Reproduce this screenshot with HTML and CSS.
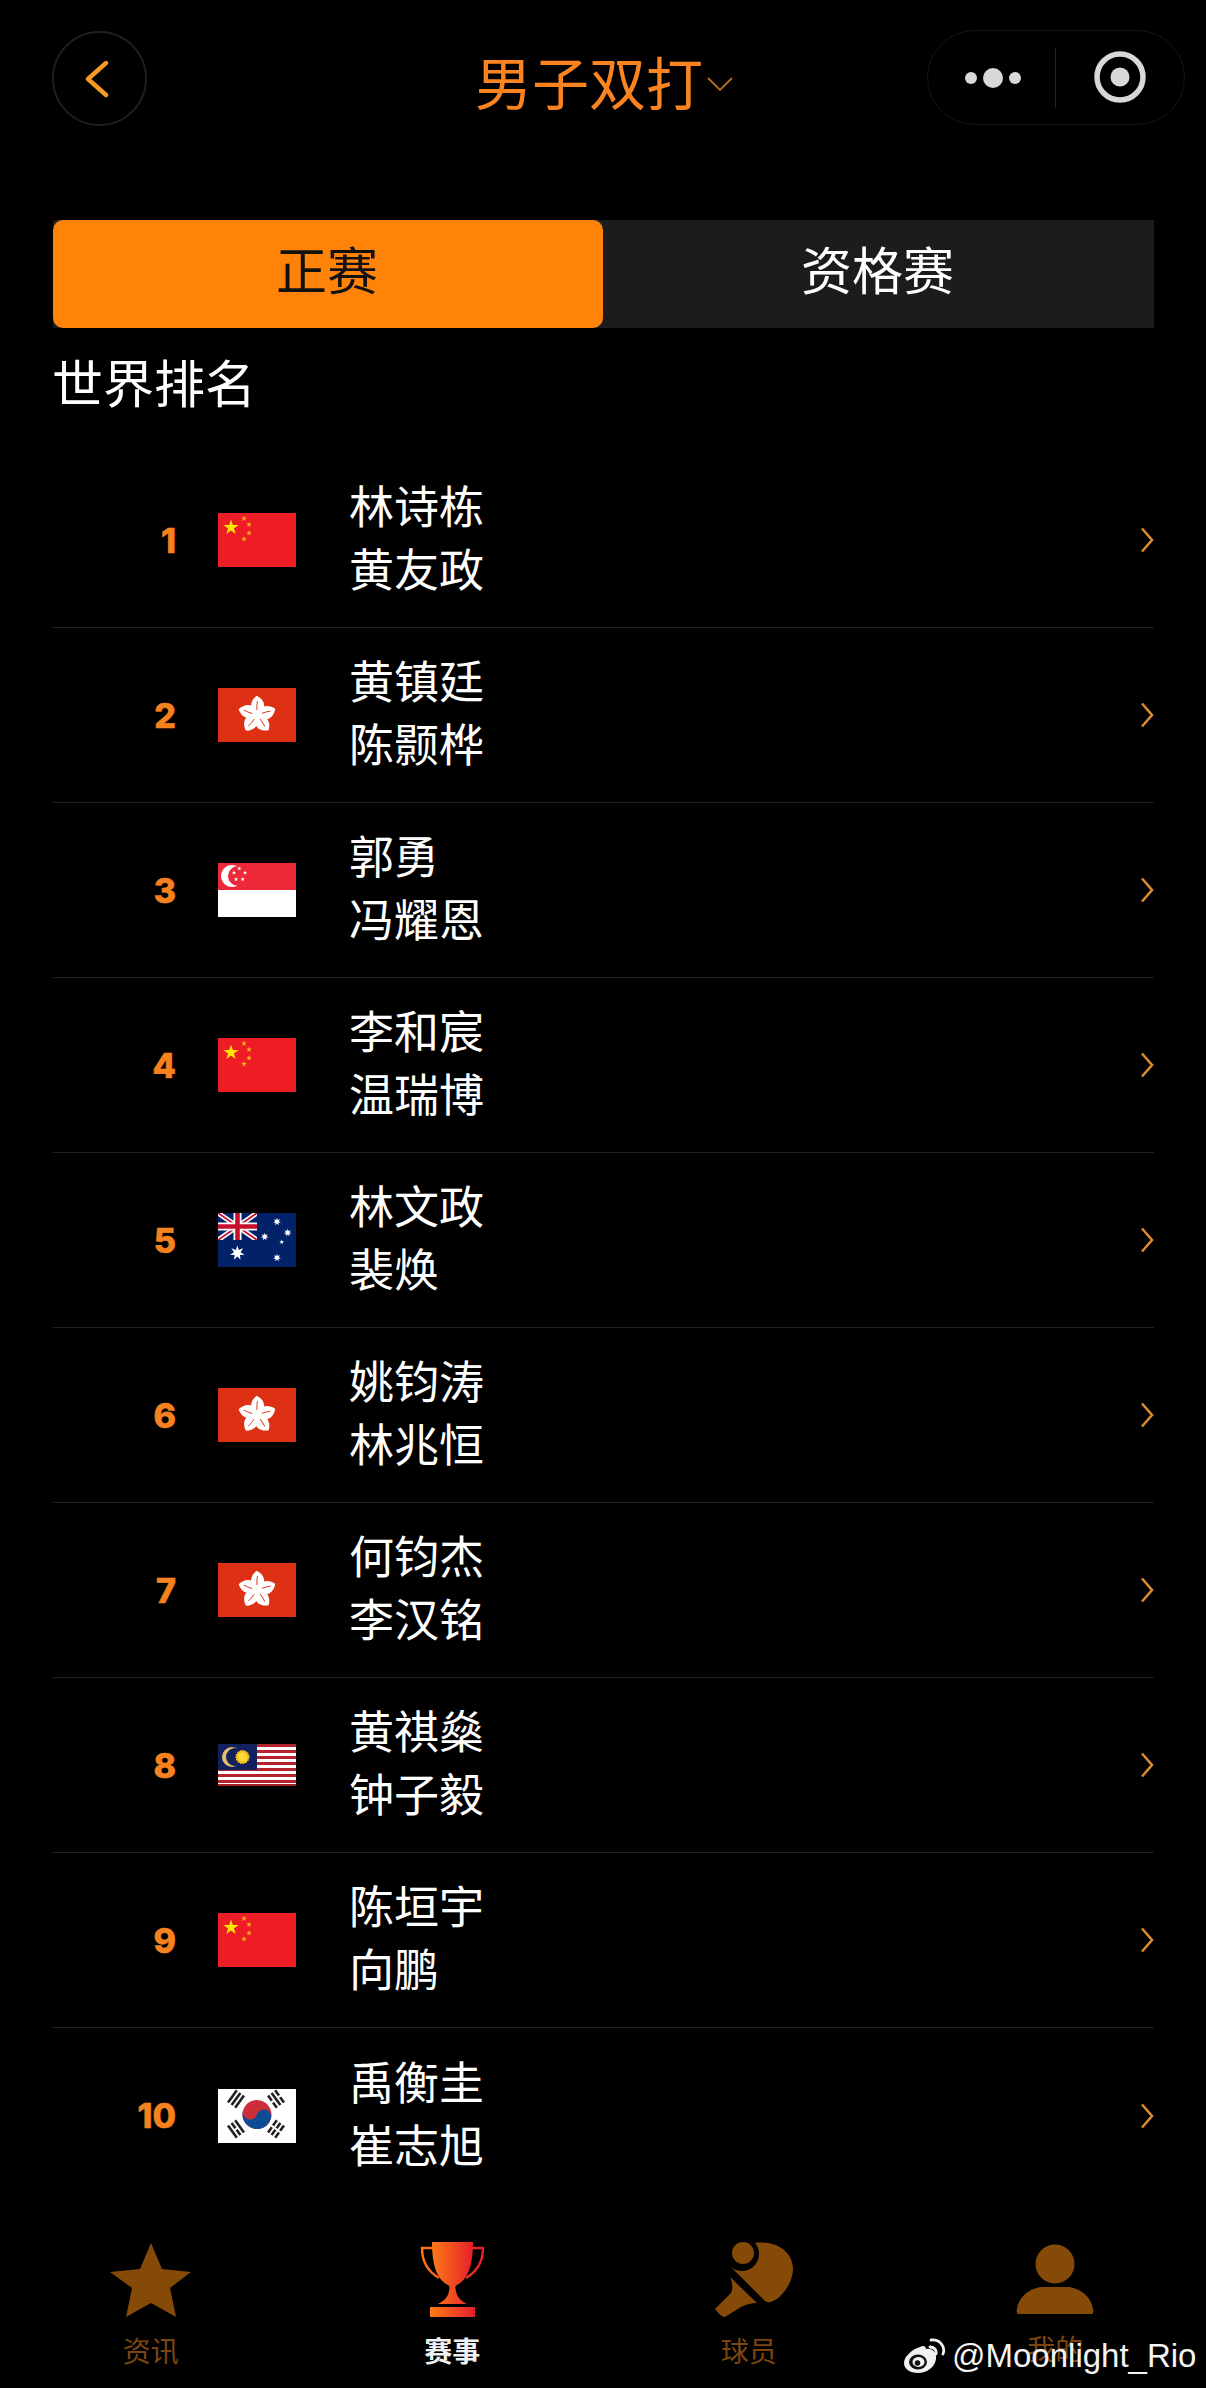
FILE: index.html
```html
<!DOCTYPE html>
<html lang="zh-CN">
<head>
<meta charset="utf-8">
<title>男子双打</title>
<link rel="stylesheet" href="styles.css">
</head>
<body>
<svg class="sprite" aria-hidden="true">
  <defs>
    <polygon id="s5" points="0,-1 .225,-.309 .951,-.309 .363,.118 .588,.809 0,.382 -.588,.809 -.363,.118 -.951,-.309 -.225,-.309"/>
    <polygon id="s7" points="0,-1 .195,-.405 .782,-.623 .439,-.1 .975,.223 .352,.281 .434,.901 0,.45 -.434,.901 -.352,.281 -.975,.223 -.439,-.1 -.782,-.623 -.195,-.405"/>
    <g id="petal">
      <path d="M0,0 C-8,-3 -10,-12 -3,-19 C6,-16 10,-7 0,0Z" fill="#fff"/>
      <path d="M-.8,-5 C-1.5,-8 -1.5,-11 -1.5,-14" stroke="#de3015" stroke-width=".9" fill="none"/>
    </g>
    <linearGradient id="cup" x1="0" x2="1" y1="0" y2="0">
      <stop offset="0" stop-color="#ff7a16"/>
      <stop offset="1" stop-color="#e51f2c"/>
    </linearGradient>
  </defs>
  <symbol id="f-cn" viewBox="0 0 78 54">
    <rect width="78" height="54" fill="#ee1c25"/>
    <use href="#s5" transform="translate(13 14.5) scale(8)" fill="#ffe600"/>
    <use href="#s5" transform="translate(26 5.5) scale(3)" fill="#f7b21a"/>
    <use href="#s5" transform="translate(31 11.5) scale(3)" fill="#f7b21a"/>
    <use href="#s5" transform="translate(31 20) scale(3)" fill="#f7b21a"/>
    <use href="#s5" transform="translate(26 26) scale(3)" fill="#f7b21a"/>
  </symbol>
  <symbol id="f-hk" viewBox="0 0 78 54">
    <rect width="78" height="54" fill="#de3015"/>
    <g transform="translate(39 27) rotate(8)">
      <use href="#petal"/>
      <use href="#petal" transform="rotate(72)"/>
      <use href="#petal" transform="rotate(144)"/>
      <use href="#petal" transform="rotate(216)"/>
      <use href="#petal" transform="rotate(288)"/>
    </g>
  </symbol>
  <symbol id="f-sg" viewBox="0 0 78 54">
    <rect width="78" height="54" fill="#fff"/>
    <rect width="78" height="27" fill="#ed2939"/>
    <circle cx="14" cy="13" r="11" fill="#fff"/>
    <circle cx="20" cy="13" r="10" fill="#ed2939"/>
    <use href="#s5" transform="translate(21.3 5.5) scale(2.3)" fill="#fff"/>
    <use href="#s5" transform="translate(27 9.8) scale(2.3)" fill="#fff"/>
    <use href="#s5" transform="translate(24.7 16.3) scale(2.3)" fill="#fff"/>
    <use href="#s5" transform="translate(18 16.3) scale(2.3)" fill="#fff"/>
    <use href="#s5" transform="translate(16 9.8) scale(2.3)" fill="#fff"/>
  </symbol>
  <symbol id="f-au" viewBox="0 0 78 54">
    <rect width="78" height="54" fill="#012169"/>
    <svg width="39" height="27" viewBox="0 0 39 27">
      <path d="M0,0 L39,27 M39,0 L0,27" stroke="#fff" stroke-width="5"/>
      <path d="M0,0 L39,27 M39,0 L0,27" stroke="#c8102e" stroke-width="1.8"/>
      <path d="M19.5,0 V27 M0,13.5 H39" stroke="#fff" stroke-width="8"/>
      <path d="M19.5,0 V27 M0,13.5 H39" stroke="#c8102e" stroke-width="4.6"/>
    </svg>
    <use href="#s7" transform="translate(19.3 40) scale(7.5)" fill="#fff"/>
    <use href="#s7" transform="translate(59 8.7) scale(4)" fill="#fff"/>
    <use href="#s7" transform="translate(69.7 19.7) scale(4)" fill="#fff"/>
    <use href="#s7" transform="translate(46.7 23.7) scale(4)" fill="#fff"/>
    <use href="#s5" transform="translate(63.7 29) scale(2.6)" fill="#fff"/>
    <use href="#s7" transform="translate(59 44.7) scale(4)" fill="#fff"/>
  </symbol>
  <symbol id="f-my" viewBox="0 0 78 42">
    <rect width="78" height="42" fill="#fff"/>
    <path d="M0,1.5H78 M0,7.5H78 M0,13.5H78 M0,19.5H78 M0,25.5H78 M0,31.5H78 M0,37.5H78" stroke="#b5242c" stroke-width="3"/>
    <path d="M0,41H78" stroke="#a81c22" stroke-width="2"/>
    <rect width="39" height="26" fill="#14205e"/>
    <circle cx="14" cy="13" r="10" fill="#e6c068"/>
    <circle cx="17" cy="13" r="9" fill="#14205e"/>
    <circle cx="24.5" cy="13" r="6.5" fill="#f3c021" stroke="#f3c021" stroke-width="1.2" stroke-dasharray="1.5 1.2"/>
    <circle cx="24.5" cy="13" r="4.6" fill="#ffd83a"/>
  </symbol>
  <symbol id="f-kr" viewBox="0 0 78 54">
    <rect width="78" height="54" fill="#fff"/>
    <g transform="translate(39 25.5) rotate(18)">
      <circle r="14.5" fill="#cd2e3a"/>
      <path d="M-14.5,0 A7.25,7.25 0 0 0 0,0 A7.25,7.25 0 0 1 14.5,0 A14.5,14.5 0 0 1 -14.5,0Z" fill="#0f4a94"/>
    </g>
    <g stroke="#222" stroke-width="2.6" fill="none">
      <path transform="translate(18 10) rotate(-54)" d="M-7.5,-4.4H7.5 M-7.5,0H7.5 M-7.5,4.4H7.5"/>
      <path transform="translate(58 10) rotate(54)" d="M-7.5,-4.4H-1 M1,-4.4H7.5 M-7.5,0H7.5 M-7.5,4.4H-1 M1,4.4H7.5"/>
      <path transform="translate(18 40) rotate(54)" d="M-7.5,-4.4H7.5 M-7.5,0H-1 M1,0H7.5 M-7.5,4.4H7.5"/>
      <path transform="translate(58 40) rotate(-54)" d="M-7.5,-4.4H-1 M1,-4.4H7.5 M-7.5,0H-1 M1,0H7.5 M-7.5,4.4H-1 M1,4.4H7.5"/>
    </g>
  </symbol>
  <symbol id="arrow" viewBox="0 0 14 26">
    <path d="M2,1.5 L12,13 L2,24.5" fill="none" stroke="#d98a30" stroke-width="2.6"/>
  </symbol>
</svg>

<div class="page">
  <header class="header">
    <button class="back" type="button" aria-label="返回">
      <svg class="back-icon" viewBox="0 0 24 38"><path d="M21,3 L3,19 L21,35" fill="none" stroke="#f59a23" stroke-width="4.4" stroke-linecap="round" stroke-linejoin="round"/></svg>
    </button>
    <h1 class="title">男子双打<svg class="title-caret" viewBox="0 0 26 14"><path d="M1,1 L13,13 L25,1" fill="none" stroke="#b56c1f" stroke-width="1.8"/></svg></h1>
    <div class="capsule">
      <svg class="capsule-dots" viewBox="0 0 60 24"><circle cx="7" cy="12" r="6" fill="#d8d8d8"/><circle cx="29" cy="12" r="10" fill="#d8d8d8"/><circle cx="51" cy="12" r="6" fill="#d8d8d8"/></svg>
      <span class="capsule-line"></span>
      <svg class="capsule-target" viewBox="0 0 52 52"><circle cx="26" cy="26" r="23" fill="none" stroke="#d8d8d8" stroke-width="5.5"/><circle cx="26" cy="26" r="9.5" fill="#d8d8d8"/></svg>
    </div>
  </header>

  <div class="tabs">
    <div class="tab tab-on">正赛</div>
    <div class="tab">资格赛</div>
  </div>

  <h2 class="heading">世界排名</h2>

  <ul class="list">
    <li class="row"><span class="rank">1</span><svg class="flag"><use href="#f-cn"/></svg><div class="names"><div>林诗栋</div><div>黄友政</div></div><svg class="arrow"><use href="#arrow"/></svg></li>
    <li class="row"><span class="rank">2</span><svg class="flag"><use href="#f-hk"/></svg><div class="names"><div>黄镇廷</div><div>陈颢桦</div></div><svg class="arrow"><use href="#arrow"/></svg></li>
    <li class="row"><span class="rank">3</span><svg class="flag"><use href="#f-sg"/></svg><div class="names"><div>郭勇</div><div>冯耀恩</div></div><svg class="arrow"><use href="#arrow"/></svg></li>
    <li class="row"><span class="rank">4</span><svg class="flag"><use href="#f-cn"/></svg><div class="names"><div>李和宸</div><div>温瑞博</div></div><svg class="arrow"><use href="#arrow"/></svg></li>
    <li class="row"><span class="rank">5</span><svg class="flag"><use href="#f-au"/></svg><div class="names"><div>林文政</div><div>裴焕</div></div><svg class="arrow"><use href="#arrow"/></svg></li>
    <li class="row"><span class="rank">6</span><svg class="flag"><use href="#f-hk"/></svg><div class="names"><div>姚钧涛</div><div>林兆恒</div></div><svg class="arrow"><use href="#arrow"/></svg></li>
    <li class="row"><span class="rank">7</span><svg class="flag"><use href="#f-hk"/></svg><div class="names"><div>何钧杰</div><div>李汉铭</div></div><svg class="arrow"><use href="#arrow"/></svg></li>
    <li class="row"><span class="rank">8</span><svg class="flag flag-my"><use href="#f-my"/></svg><div class="names"><div>黄祺燊</div><div>钟子毅</div></div><svg class="arrow"><use href="#arrow"/></svg></li>
    <li class="row"><span class="rank">9</span><svg class="flag"><use href="#f-cn"/></svg><div class="names"><div>陈垣宇</div><div>向鹏</div></div><svg class="arrow"><use href="#arrow"/></svg></li>
    <li class="row"><span class="rank">10</span><svg class="flag"><use href="#f-kr"/></svg><div class="names"><div>禹衡圭</div><div>崔志旭</div></div><svg class="arrow"><use href="#arrow"/></svg></li>
  </ul>

  <nav class="tabbar">
    <div class="tabitem">
      <svg class="tabicon" viewBox="0 0 90 78"><polygon points="45,2 56,28 85,31 64,47 70,76 45,62 20,76 26,47 4,31 34,28" fill="#854a08"/></svg>
      <span class="tablabel">资讯</span>
    </div>
    <div class="tabitem">
      <svg class="tabicon" viewBox="0 0 90 78">
        <path d="M26,7 H15 C15,20 20,30 32,37 M65,7 H76 C76,20 71,30 59,37" fill="none" stroke="url(#cup)" stroke-width="2.4"/>
        <path d="M25,1 H66 C66,22 62,38 50,44 C48,45 48,47 49,50 C50,56 54,60 60,63 H31 C37,60 41,56 42,50 C43,47 43,45 41,44 C29,38 25,22 25,1Z" fill="url(#cup)"/>
        <rect x="23" y="66" width="45" height="10" fill="url(#cup)"/>
      </svg>
      <span class="tablabel tablabel-on">赛事</span>
    </div>
    <div class="tabitem">
      <svg class="tabicon" viewBox="0 0 90 78" fill="#854a08">
        <circle cx="34" cy="12" r="11"/>
        <path d="M46,2 C66,-1 84,10 84,28 C84,42 72,58 62,61 Q59,62 56,60 L21,25 A17,17 0 0 0 46,2Z"/>
        <path d="M21,36 L48,62 Q40,62 32,66 L16,76 Q12,76 6,68 L22,52 Q25,44 21,36Z"/>
      </svg>
      <span class="tablabel tablabel-left">球员</span>
    </div>
    <div class="tabitem">
      <svg class="tabicon" viewBox="0 0 90 78" fill="#854a08">
        <circle cx="45" cy="23" r="19.5"/>
        <path d="M8,73 Q6,72 7,68 C9,54 22,46 34,46 L56,46 C68,46 81,54 83,68 Q84,72 82,73Z"/>
      </svg>
      <span class="tablabel tablabel-up">我的</span>
    </div>
  </nav>

  <div class="mark">
    <svg class="mark-logo" viewBox="0 0 42 36">
      <path d="M16,9 C19,7 22,8 22,11 C28,10 33,14 32,21 C31,29 23,35 14,35 C6,35 0,31 0,25 C0,18 9,11 16,9Z" fill="#f2f2f2"/>
      <ellipse cx="14" cy="24" rx="9" ry="7.5" fill="#111"/>
      <ellipse cx="14.5" cy="24" rx="6" ry="5" fill="#f2f2f2"/>
      <circle cx="13.5" cy="25" r="2.8" fill="#111"/>
      <path d="M26,9 C30,9 33,12 32,16 M27,2 C35,1 42,8 39,16" fill="none" stroke="#f2f2f2" stroke-width="2.8" stroke-linecap="round"/>
    </svg>
    <span class="mark-text">@Moonlight_Rio</span>
  </div>
</div>
</body>
</html>
```

FILE: styles.css
```css
* { box-sizing: border-box; }

html, body {
  margin: 0;
  padding: 0;
  background: #000;
}

.sprite {
  position: absolute;
  width: 0;
  height: 0;
  overflow: hidden;
}

.page {
  position: relative;
  width: 1206px;
  height: 2388px;
  overflow: hidden;
  background: #000;
  color: #fff;
  font-family: "Noto Sans CJK SC", "Noto Sans", sans-serif;
}

/* header */
.header {
  display: flex;
  align-items: center;
  height: 95px;
  margin-top: 30px;
  padding: 0 21px 0 52px;
}

.back {
  display: flex;
  align-items: center;
  justify-content: center;
  width: 95px;
  height: 95px;
  padding: 0 6px 0 0;
  margin-top: 2px;
  background: none;
  border: 2px solid #1f1f1f;
  border-radius: 50%;
}

.back-icon {
  width: 24px;
  height: 38px;
}

.title {
  display: flex;
  align-items: center;
  margin: 4px 0 0 328px;
  font-size: 57px;
  font-weight: 400;
  line-height: 70px;
  color: #fb8420;
}

.title-caret {
  width: 26px;
  height: 14px;
  margin: 8px 0 0 4px;
}

.capsule {
  display: flex;
  align-items: center;
  width: 258px;
  height: 95px;
  margin-left: auto;
  padding-left: 36px;
  border: 1.5px solid #151515;
  border-radius: 48px;
}

.capsule-dots {
  width: 60px;
  height: 24px;
}

.capsule-line {
  width: 1px;
  height: 60px;
  margin-left: 31px;
  background: #262626;
}

.capsule-target {
  width: 52px;
  height: 52px;
  margin: -1px 0 0 38px;
}

/* segmented tabs */
.tabs {
  display: flex;
  height: 108px;
  margin: 95px 52px 0 53px;
  background: #1c1c1c;
}

.tab {
  flex: 1;
  display: flex;
  align-items: center;
  justify-content: center;
  padding: 0 2px 12px 0;
  font-size: 51px;
  color: #fff;
}

.tab-on {
  flex: none;
  width: 550px;
  background: #ff8308;
  border-radius: 10px;
  color: #111;
}

.heading {
  margin: 21px 0 40px 52px;
  font-size: 51px;
  font-weight: 400;
  line-height: 64px;
  color: #fff;
}

/* ranking list */
.list {
  margin: 0 52px 0 53px;
  padding: 0;
  list-style: none;
}

.row {
  display: flex;
  align-items: center;
  height: 175px;
  border-bottom: 1.5px solid #1f1f1f;
}

.row:last-child {
  border-bottom: 0;
}

.rank {
  width: 123px;
  font-family: "Inter", "DejaVu Sans", sans-serif;
  font-size: 34px;
  font-weight: 800;
  -webkit-text-stroke: 0.6px #f5821f;
  text-align: right;
  color: #f5821f;
}

.flag {
  flex: none;
  width: 78px;
  height: 54px;
  margin-left: 42px;
}

.flag-my {
  height: 42px;
}

.names {
  margin-left: 53px;
  padding-bottom: 8px;
  font-size: 45px;
  line-height: 63px;
  color: #fff;
}

.arrow {
  flex: none;
  width: 14px;
  height: 26px;
  margin-left: auto;
}

/* bottom tab bar */
.tabbar {
  display: grid;
  grid-template-columns: repeat(4, 1fr);
  margin-top: 38px;
}

.tabitem {
  display: flex;
  flex-direction: column;
  align-items: center;
}

.tabicon {
  width: 90px;
  height: 78px;
}

.tablabel {
  margin-top: 11px;
  font-size: 28px;
  line-height: 40px;
  color: #7d4610;
}

.tablabel-on {
  font-weight: 700;
  color: #f0f0f0;
}

.tablabel-left {
  margin-right: 10px;
}

.tablabel-up {
  margin-top: 9px;
}

/* watermark over the tab bar */
.mark {
  position: absolute;
  left: 904px;
  top: 2338px;
  display: flex;
  align-items: center;
  gap: 6px;
}

.mark-logo {
  width: 42px;
  height: 36px;
}

.mark-text {
  font-family: "Liberation Sans", Arial, sans-serif;
  font-size: 33px;
  line-height: 36px;
  color: #f4f4f4;
}
```
